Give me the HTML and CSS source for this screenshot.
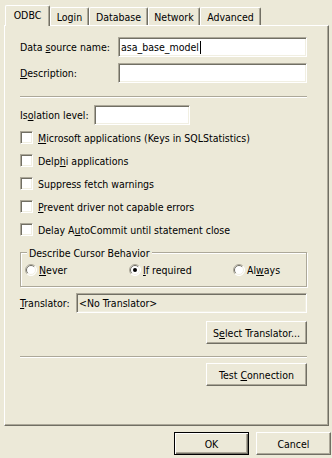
FILE: index.html
```html
<!DOCTYPE html>
<html>
<head>
<meta charset="utf-8">
<link rel="stylesheet" href="styles.css">
</head>
<body>
<div class="dialog">
  <div class="tabs">
    <div class="tab active w-odbc">ODBC</div>
    <div class="tab w-login">Login</div>
    <div class="tab w-db">Database</div>
    <div class="tab w-net">Network</div>
    <div class="tab w-adv">Advanced</div>
  </div>
  <div class="panel">
    <div class="content">
      <div class="row">
        <span class="label lw-dsn">Data <u>s</u>ource name:</span>
        <div class="input">asa_base_model<span class="caret"></span></div>
      </div>
      <div class="row gap6">
        <span class="label lw-dsn"><u>D</u>escription:</span>
        <div class="input"></div>
      </div>
      <div class="sep sep-a"></div>
      <div class="row gap7">
        <span class="label lw-iso">Is<u>o</u>lation level:</span>
        <div class="input w-iso"></div>
      </div>
      <div class="checks">
        <div class="check"><span class="box"></span><span><u>M</u>icrosoft applications (Keys in SQLStatistics)</span></div>
        <div class="check"><span class="box"></span><span>Delp<u>h</u>i applications</span></div>
        <div class="check"><span class="box"></span><span>Suppress fetch warnings</span></div>
        <div class="check"><span class="box"></span><span><u>P</u>revent driver not capable errors</span></div>
        <div class="check"><span class="box"></span><span>Delay A<u>u</u>toCommit until statement close</span></div>
      </div>
      <div class="group">
        <span class="legend">Describe Cursor Behavior</span>
        <div class="radios">
          <div class="radio">
            <svg width="12" height="12" viewBox="0 0 12 12"><circle cx="6" cy="6" r="5.5" fill="#fff"/><path d="M9.9 2.1 A5.5 5.5 0 0 0 2.1 9.9" stroke="#ACA899" fill="none"/><path d="M9.2 2.8 A4.5 4.5 0 0 0 2.8 9.2" stroke="#716F64" fill="none"/><path d="M2.1 9.9 A5.5 5.5 0 0 0 9.9 2.1" stroke="#fff" fill="none"/><path d="M2.8 9.2 A4.5 4.5 0 0 0 9.2 2.8" stroke="#F1EFE2" fill="none"/></svg>
            <span><u>N</u>ever</span>
          </div>
          <div class="radio">
            <svg width="12" height="12" viewBox="0 0 12 12"><circle cx="6" cy="6" r="5.5" fill="#fff"/><path d="M9.9 2.1 A5.5 5.5 0 0 0 2.1 9.9" stroke="#ACA899" fill="none"/><path d="M9.2 2.8 A4.5 4.5 0 0 0 2.8 9.2" stroke="#716F64" fill="none"/><path d="M2.1 9.9 A5.5 5.5 0 0 0 9.9 2.1" stroke="#fff" fill="none"/><path d="M2.8 9.2 A4.5 4.5 0 0 0 9.2 2.8" stroke="#F1EFE2" fill="none"/><circle cx="6" cy="6" r="2" fill="#000"/></svg>
            <span><u>I</u>f required</span>
          </div>
          <div class="radio">
            <svg width="12" height="12" viewBox="0 0 12 12"><circle cx="6" cy="6" r="5.5" fill="#fff"/><path d="M9.9 2.1 A5.5 5.5 0 0 0 2.1 9.9" stroke="#ACA899" fill="none"/><path d="M9.2 2.8 A4.5 4.5 0 0 0 2.8 9.2" stroke="#716F64" fill="none"/><path d="M2.1 9.9 A5.5 5.5 0 0 0 9.9 2.1" stroke="#fff" fill="none"/><path d="M2.8 9.2 A4.5 4.5 0 0 0 9.2 2.8" stroke="#F1EFE2" fill="none"/></svg>
            <span>Al<u>w</u>ays</span>
          </div>
        </div>
      </div>
      <div class="row gap6">
        <span class="label lw-tr"><u>T</u>ranslator:</span>
        <div class="input disabled">&lt;No Translator&gt;</div>
      </div>
      <div class="btn-row mt8">
        <button class="btn wide">S<u>e</u>lect Translator...</button>
      </div>
      <div class="sep sep-b"></div>
      <div class="btn-row mt5">
        <button class="btn wide">Test <u>C</u>onnection</button>
      </div>
    </div>
  </div>
  <div class="buttons">
    <button class="btn std default">OK</button>
    <button class="btn std">Cancel</button>
  </div>
</div>
</body>
</html>
```

FILE: styles.css
```css
* { box-sizing: border-box; }
html, body { margin: 0; padding: 0; }
body {
  background: #ECE9D8;
  font-family: "DejaVu Sans Condensed", "DejaVu Sans", sans-serif;
  font-size: 10.5px;
  color: #000;
  width: 332px;
  height: 458px;
  overflow: hidden;
}
u { text-underline-offset: 1px; }
.dialog { width: 332px; height: 458px; padding-top: 5px; }

.tabs {
  display: flex;
  align-items: flex-end;
  height: 20px;
  margin-left: 5px;
  position: relative;
  z-index: 1;
}
.tab {
  height: 18px;
  border-left: 1px solid #fff;
  border-top: 1px solid #fff;
  border-right: 1px solid #716F64;
  box-shadow: inset -1px 0 0 #ACA899;
  border-top-left-radius: 2px;
  border-top-right-radius: 2px;
  display: flex;
  align-items: center;
  justify-content: center;
  padding-top: 1px;
}
.tab.active {
  height: 21px;
  margin-bottom: -1px;
  background: #ECE9D8;
  padding-top: 0;
  padding-bottom: 2px;
}
.w-odbc { width: 45px; }
.w-login { width: 39px; }
.w-db { width: 59px; }
.w-net { width: 52px; }
.w-adv { width: 61px; }

.panel {
  margin-left: 4px;
  width: 325px;
  height: 401px;
  border-top: 1px solid #fff;
  border-left: 1px solid #fff;
  border-right: 1px solid #716F64;
  border-bottom: 1px solid #716F64;
  box-shadow: inset -1px -1px 0 #ACA899;
  padding: 11px 0 0 15px;
}
.content { width: 287px; }

.row { display: flex; align-items: center; }
.gap6 { margin-top: 6px; }
.gap7 { margin-top: 7px; }
.label { flex: none; white-space: nowrap; }
.lw-dsn { width: 98px; }
.lw-iso { width: 74px; }
.lw-tr { width: 56px; }

.input {
  flex: 1;
  height: 20px;
  background: #fff;
  border-top: 1px solid #ACA899;
  border-left: 1px solid #ACA899;
  border-bottom: 1px solid #fff;
  border-right: 1px solid #fff;
  box-shadow: inset 1px 1px 0 #716F64, inset -1px -1px 0 #F1EFE2;
  padding-left: 2px;
  display: flex;
  align-items: center;
  white-space: nowrap;
}
.input.w-iso { flex: none; width: 96px; }
.input.disabled { background: #ECE9D8; }
.caret {
  display: inline-block;
  width: 1px;
  height: 13px;
  background: #000;
  margin-left: 1px;
}

.sep {
  height: 2px;
  border-top: 1px solid #ACA899;
  border-bottom: 1px solid #fff;
}
.sep-a { margin-top: 13px; }
.sep-b { margin-top: 12px; }

.checks { margin-top: 1px; }
.check {
  height: 23px;
  display: flex;
  align-items: center;
  gap: 5px;
  white-space: nowrap;
}
.box {
  flex: none;
  width: 13px;
  height: 13px;
  background: #fff;
  border-top: 1px solid #ACA899;
  border-left: 1px solid #ACA899;
  border-bottom: 1px solid #fff;
  border-right: 1px solid #fff;
  box-shadow: inset 1px 1px 0 #716F64, inset -1px -1px 0 #F1EFE2;
}

.group {
  position: relative;
  margin-top: 11px;
  height: 35px;
  border: 1px solid #ACA899;
  box-shadow: inset 1px 1px 0 #fff, 1px 1px 0 #fff;
  padding: 11px 0 0 4px;
}
.legend {
  position: absolute;
  top: -7px;
  left: 6px;
  padding: 0 2px;
  background: #ECE9D8;
  line-height: 14px;
  white-space: nowrap;
}
.radios {
  display: grid;
  grid-template-columns: 104px 104px 1fr;
  height: 12px;
}
.radio {
  display: flex;
  align-items: center;
  gap: 2px;
  white-space: nowrap;
}
.radio svg { flex: none; display: block; }

.btn-row { display: flex; justify-content: flex-end; }
.mt8 { margin-top: 8px; }
.mt5 { margin-top: 5px; }

.btn {
  height: 23px;
  background: #ECE9D8;
  border: 1px solid;
  border-color: #fff #716F64 #716F64 #fff;
  box-shadow: inset -1px -1px 0 #ACA899;
  font: inherit;
  color: #000;
  padding: 0;
  white-space: nowrap;
}
.btn.wide { width: 101px; }
.btn.std { width: 75px; }
.btn.default {
  border: 1px solid #000;
  box-shadow: inset 1px 1px 0 #fff, inset -1px -1px 0 #716F64, inset -2px -2px 0 #ACA899;
}

.buttons {
  display: flex;
  justify-content: flex-end;
  gap: 7px;
  margin-top: 6px;
  padding-right: 1px;
}
```
